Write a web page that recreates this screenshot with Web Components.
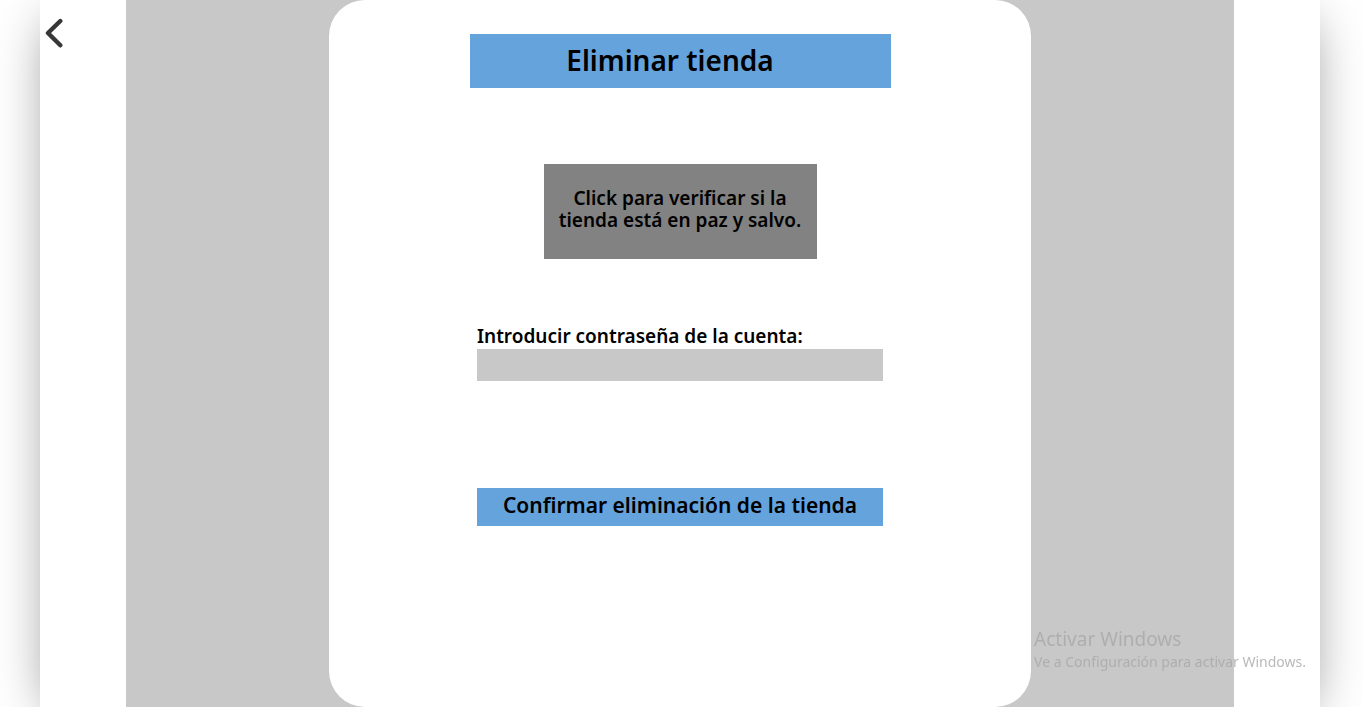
<!DOCTYPE html>
<html lang="es">
<head>
<meta charset="utf-8">
<meta name="viewport" content="width=device-width, initial-scale=1">
<title>Eliminar tienda</title>
<style>
  html, body { margin: 0; height: 100%; overflow: hidden; }
  body { background: #fff; font-family: "Noto Sans", "Open Sans", sans-serif; font-weight: 600; color: #000; }
</style>
</head>
<body>
<app-shell>
  <back-link slot="nav"></back-link>
  <store-card>
    <page-title slot="title">Eliminar tienda</page-title>
    <verify-button>Click para verificar si la tienda está en paz y salvo.</verify-button>
    <password-field label="Introducir contraseña de la cuenta:"></password-field>
    <confirm-button>Confirmar eliminación de la tienda</confirm-button>
  </store-card>
</app-shell>
<system-notice>
  <span slot="heading">Activar Windows</span>
  Ve a Configuración para activar Windows.
</system-notice>
<script>
const define = (name, html, setup) => customElements.define(name, class extends HTMLElement {
  constructor() {
    super();
    this.attachShadow({ mode: "open" }).innerHTML = html;
  }
  connectedCallback() { if (setup) setup(this); }
});

define("app-shell", `
  <style>
    :host { display: block; height: 100%; padding: 0 43px 0 40px; box-sizing: border-box; }
    .frame { display: grid; grid-template-columns: 86px 1fr 86px; height: 100%; background: #fff; box-shadow: 0 12px 50px -12px rgba(0,0,0,.5); }
    main { display: flex; justify-content: center; background: #c8c8c8; }
  </style>
  <div class="frame"><nav><slot name="nav"></slot></nav><main><slot></slot></main></div>`);

define("back-link", `
  <style>
    :host { display: block; padding: 18px 0 0 4px; }
    a { display: block; width: 20px; height: 30px; }
    svg { display: block; }
  </style>
  <a href="#" aria-label="Volver"><svg width="20" height="30" viewBox="0 0 20 30" fill="none" stroke="#373737" stroke-width="4.400" stroke-linecap="round" stroke-linejoin="round"><path d="M16.300 3 4 15 16.300 27.300"/></svg></a>`);

define("store-card", `
  <style>
    :host { display: flex; flex-direction: column; align-items: center; box-sizing: border-box; width: 702px; max-width: 100%; padding-top: 34px; background: #fff; border-radius: 36px; }
    .form { display: flex; flex-direction: column; align-items: center; width: 406px; max-width: 100%; padding-top: 76px; }
  </style>
  <slot name="title"></slot>
  <div class="form"><slot></slot></div>`);

define("page-title", `
  <style>
    :host { display: block; width: 421px; max-width: 100%; background: #65a3dd; }
    h1 { margin: 0; padding: 0 20px 2px 0; font-size: 28px; line-height: 52px; font-weight: inherit; text-align: center; }
  </style>
  <h1><slot></slot></h1>`);

define("verify-button", `
  <style>
    :host { display: block; width: 273px; margin-bottom: 64px; }
    button { width: 100%; height: 95px; border: 0; padding: 0 8px 6px; background: #828282; color: #000; font: inherit; font-size: 19px; line-height: 22px; }
  </style>
  <button type="button"><slot></slot></button>`);

define("password-field", `
  <style>
    :host { display: block; width: 100%; margin-bottom: 107px; }
    label { display: block; font-size: 19px; line-height: 26px; white-space: nowrap; }
    input { display: block; box-sizing: border-box; width: 100%; height: 32px; border: 0; padding: 0 8px; background: #c8c8c8; font: inherit; }
  </style>
  <label for="password"></label><input id="password" type="password">`,
  host => { host.shadowRoot.querySelector("label").textContent = host.getAttribute("label"); });

define("confirm-button", `
  <style>
    :host { display: block; width: 100%; }
    button { width: 100%; height: 38px; border: 0; padding: 0 0 4px; background: #65a3dd; color: #000; font: inherit; font-size: 21px; line-height: 34px; white-space: nowrap; }
  </style>
  <button type="button"><slot></slot></button>`);

define("system-notice", `
  <style>
    :host { position: fixed; right: 57px; bottom: 35px; color: rgba(168,168,168,.8); font: 400 14px/20px "Noto Sans", sans-serif; white-space: nowrap; pointer-events: none; }
    div { font-size: 19px; line-height: 26px; }
  </style>
  <div><slot name="heading"></slot></div><slot></slot>`);
</script>
</body>
</html>
